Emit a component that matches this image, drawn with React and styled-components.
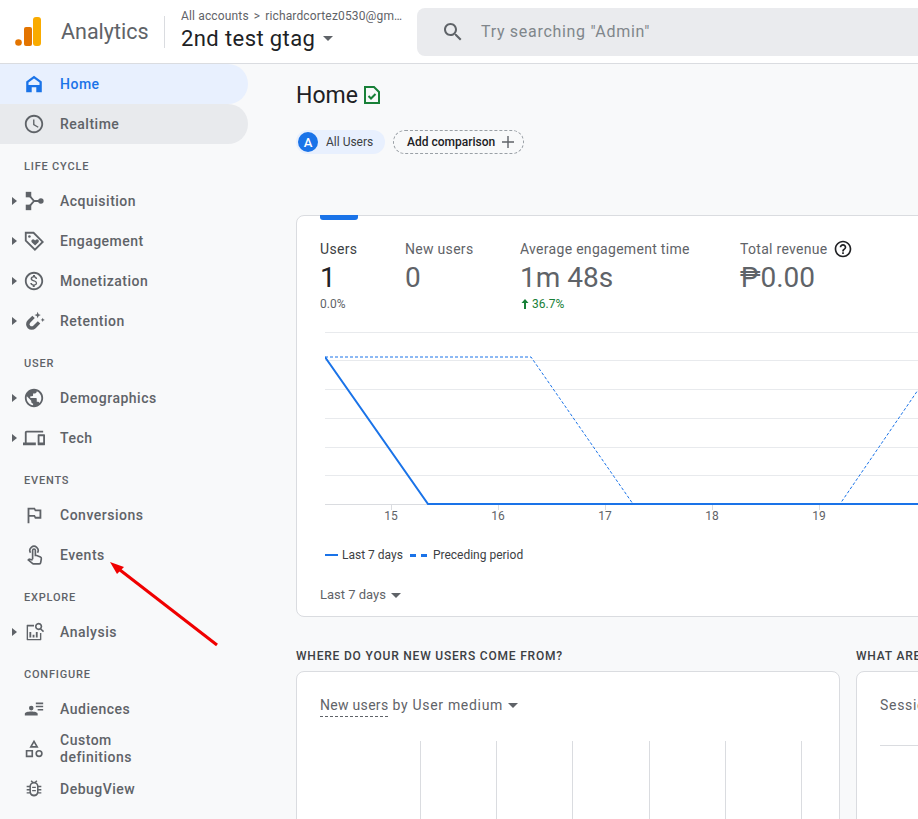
import React from 'react'
import styled, { createGlobalStyle } from 'styled-components'

const colors = {
  bg: '#f8f9fa',
  line: '#dadce0',
  grid: '#e8eaed',
  grey: '#5f6368',
  dark: '#202124',
  blue: '#1a73e8',
  paleBlue: '#e8f0fe',
  green: '#188038',
}

const GlobalStyle = createGlobalStyle`
  html, body {
    margin: 0;
    height: 100%;
    overflow: hidden;
    background: ${colors.bg};
    font-family: Roboto, "Liberation Sans", sans-serif;
  }
`

const Page = styled.div`
  position: relative;
  width: 918px;
  height: 819px;
  overflow: hidden;
  display: flex;
  flex-direction: column;
`

const Header = styled.header`
  height: 63px;
  flex: none;
  display: flex;
  align-items: center;
  background: #fff;
  border-bottom: 1px solid ${colors.line};
  white-space: nowrap;
`

const Logo = styled.svg`
  width: 32px;
  height: 32px;
  margin-left: 13px;
  flex: none;
`

const Product = styled.div`
  margin-left: 16px;
  width: 103px;
  flex: none;
  font-size: 21.5px;
  color: ${colors.grey};
`

const Account = styled.div`
  border-left: 1px solid ${colors.line};
  height: 32px;
  flex: none;
  margin-right: 13px;
`

const Picker = styled.div`
  width: 223px;
  flex: none;
  margin-left: 3px;
`

const Crumb = styled.div`
  font-size: 12px;
  line-height: 16px;
  letter-spacing: 0.15px;
  color: ${colors.grey};
  margin-top: -3px;
`

const CrumbSep = styled.span`
  margin: 0 5px;
`

const Property = styled.div`
  display: flex;
  align-items: center;
  font-size: 22px;
  line-height: 27px;
  letter-spacing: 0.4px;
  color: ${colors.dark};
  margin-top: 1px;
`

const Caret = styled.i`
  display: inline-block;
  width: 0;
  height: 0;
  border-left: 5px solid transparent;
  border-right: 5px solid transparent;
  border-top: 5px solid ${colors.grey};
  margin-left: ${p => p.$gap || 8}px;
`

const SearchBox = styled.div`
  width: 560px;
  height: 48px;
  flex: none;
  margin-left: 13px;
  padding-left: 24px;
  box-sizing: border-box;
  display: flex;
  align-items: center;
  gap: 16px;
  background: #eaebee;
  border-radius: 8px;
  font-size: 16px;
  letter-spacing: 0.7px;
  color: #80868b;
`

const SearchIcon = styled.svg`
  width: 24px;
  height: 24px;
  flex: none;
  fill: ${colors.grey};
`

const Body = styled.div`
  flex: 1;
  display: flex;
  min-height: 0;
`

const Sidebar = styled.nav`
  width: 248px;
  flex: none;
`

const SectionLabel = styled.div`
  height: 37px;
  padding: 16px 0 0 24px;
  box-sizing: border-box;
  font-size: 11px;
  line-height: 14px;
  font-weight: 500;
  letter-spacing: 0.8px;
  color: ${colors.grey};
`

const Row = styled.div`
  height: 40px;
  display: flex;
  align-items: center;
  padding-left: 12px;
  border-radius: ${p => (p.$active || p.$hover ? '0 20px 20px 0' : '0')};
  background: ${p => (p.$active ? colors.paleBlue : p.$hover ? '#e8eaed' : 'transparent')};
  color: ${p => (p.$active ? colors.blue : colors.grey)};
`

const Expander = styled.span`
  width: 10px;
  flex: none;
  display: flex;
  align-items: center;
`

const ExpanderMark = styled.i`
  width: 0;
  height: 0;
  border-top: 4px solid transparent;
  border-bottom: 4px solid transparent;
  border-left: 5px solid ${colors.grey};
`

const RowIcon = styled.svg`
  width: 22px;
  height: 22px;
  margin: 0 1px;
  flex: none;
  fill: currentColor;
`

const RowLabel = styled.span`
  margin-left: 14px;
  font-size: 14px;
  line-height: 17px;
  font-weight: 500;
  letter-spacing: 0.5px;
`

const Main = styled.main`
  flex: 1;
  min-width: 0;
  padding-left: 48px;
`

const TitleRow = styled.div`
  height: 32px;
  margin-top: 15px;
  display: flex;
  align-items: center;
  gap: 6px;
  font-size: 23px;
  color: ${colors.dark};
`

const TitleIcon = styled.svg`
  width: 20px;
  height: 20px;
  fill: none;
  stroke: ${colors.green};
  stroke-width: 2;
  margin-left: -2px;
`

const PillRow = styled.div`
  display: flex;
  align-items: center;
  gap: 8px;
  margin-top: 19px;
`

const SegmentPill = styled.div`
  height: 24px;
  width: 89px;
  box-sizing: border-box;
  display: flex;
  align-items: center;
  gap: 8px;
  padding-left: 2px;
  border-radius: 12px;
  background: ${colors.paleBlue};
  font-size: 12px;
  color: #3c4043;
`

const Badge = styled.span`
  width: 20px;
  height: 20px;
  border-radius: 50%;
  background: ${colors.blue};
  color: #fff;
  font-size: 13px;
  font-weight: 500;
  display: flex;
  align-items: center;
  justify-content: center;
`

const ComparePill = styled.div`
  height: 24px;
  width: 131px;
  box-sizing: border-box;
  display: flex;
  align-items: center;
  gap: 6px;
  padding-left: 13px;
  border: 1px dashed #9aa0a6;
  border-radius: 12px;
  font-size: 12px;
  font-weight: 500;
  color: ${colors.dark};
`

const Card = styled.section`
  position: relative;
  box-sizing: border-box;
  width: ${p => p.$width}px;
  height: ${p => p.$height}px;
  flex: none;
  background: #fff;
  border: 1px solid ${colors.line};
  border-radius: 8px;
  padding-left: 23px;
`

const OverviewCard = styled(Card)`
  margin-top: 61px;
`

const ActiveTab = styled.div`
  position: absolute;
  left: 23px;
  top: -1px;
  width: 38px;
  height: 5px;
  background: ${colors.blue};
  border-radius: 0 0 3px 3px;
`

const Metrics = styled.div`
  display: grid;
  grid-template-columns: 85px 115px 220px auto;
  justify-content: start;
  padding-top: 24px;
  height: 91px;
`

const MetricName = styled.div`
  font-size: 14px;
  line-height: 18px;
  letter-spacing: 0.3px;
  color: ${p => (p.$on ? '#3c4043' : colors.grey)};
  display: flex;
  align-items: center;
  gap: 5px;
`

const HelpIcon = styled.svg`
  width: 20px;
  height: 20px;
  margin: -1px 0;
  fill: ${colors.dark};
`

const MetricValue = styled.div`
  font-size: 28px;
  line-height: 36px;
  margin-top: 2px;
  color: ${p => (p.$on ? colors.dark : colors.grey)};
`

const MetricDelta = styled.div`
  font-size: 12px;
  line-height: 14px;
  margin-top: 1px;
  color: ${p => (p.$up ? colors.green : colors.grey)};
  display: flex;
  align-items: center;
  gap: 2px;
`

const Chart = styled.svg`
  display: block;
  width: 593px;
  height: 195px;
  margin-left: 5px;
  margin-top: 1px;
`

const AxisText = styled.text`
  font-size: 12px;
  fill: ${colors.grey};
  text-anchor: middle;
`

const Legend = styled.div`
  display: flex;
  align-items: center;
  height: 16px;
  margin: 20px 0 0 5px;
  font-size: 12px;
  color: #3c4043;
`

const SolidKey = styled.span`
  width: 13px;
  height: 2px;
  background: ${colors.blue};
  margin-right: 4px;
`

const DashedKey = styled.span`
  width: 17px;
  height: 0;
  border-top: 3px dashed ${colors.blue};
  margin: 0 6px 0 7px;
`

const RangeSelect = styled.div`
  display: flex;
  align-items: center;
  margin-top: 24px;
  font-size: 13px;
  line-height: 16px;
  color: ${colors.grey};
`

const QuestionRow = styled.div`
  display: flex;
  gap: 16px;
  margin-top: 32px;
`

const Question = styled.h2`
  width: 544px;
  flex: none;
  margin: 0;
  font-size: 12px;
  line-height: 14px;
  font-weight: 500;
  letter-spacing: 0.8px;
  color: #3c4043;
  white-space: nowrap;
`

const CardRow = styled.div`
  display: flex;
  gap: 16px;
  margin-top: 8px;
`

const CardTitle = styled.div`
  display: flex;
  align-items: center;
  padding-top: 24px;
  font-size: 14px;
  line-height: 18px;
  letter-spacing: 0.7px;
  color: ${colors.grey};
`

const Dotted = styled.span`
  border-bottom: 1px dashed ${colors.grey};
  padding-bottom: 2px;
  margin: 0 4px -3px 0;
  letter-spacing: 0.3px;
`

const Bars = styled.div`
  display: flex;
  margin: 27px 0 0 100px;
`

const BarLine = styled.div`
  width: 76.2px;
  height: 100px;
  flex: none;
  border-left: 1px solid ${colors.line};
  box-sizing: border-box;
`

const Rule = styled.div`
  height: 1px;
  background: ${colors.line};
  margin-top: 31px;
`

const Arrow = styled.svg`
  position: absolute;
  left: 100px;
  top: 555px;
  width: 125px;
  height: 100px;
`

const line = { fill: 'none', stroke: 'currentColor', strokeWidth: 2 }

const icons = {
  home: <path fillRule="evenodd" d="M12 3 3.500 9.400V21h17V9.400L12 3zm0 2.900-6 4.500V13h12v-2.600l-6-4.500zM9.500 15.500V21h5v-5.500h-5z" />,
  clock: <path d="M11.990 2C6.470 2 2 6.480 2 12s4.470 10 9.990 10C17.520 22 22 17.520 22 12S17.520 2 11.990 2zM12 20c-4.420 0-8-3.580-8-8s3.580-8 8-8 8 3.580 8 8-3.580 8-8 8zm.5-13H11v6l5.250 3.150.750-1.230-4.500-2.670z" />,
  acquisition: (
    <>
      <rect x="3" y="2" width="6" height="6" />
      <rect x="3" y="16" width="6" height="6" />
      <circle cx="19.500" cy="12" r="3" />
      <path {...line} d="M6 5l6 7-6 7M12 12h6" />
    </>
  ),
  tag: (
    <>
      <path {...line} d="M3 3h8.500l10 10-8.500 8.500-10-10V3z" />
      <circle cx="7" cy="7" r="1.400" />
      <path d="m13.200 17-3.700-3.700a2 2 0 0 1 2.800-2.800l.9.900.9-.9a2 2 0 0 1 2.800 2.800L13.200 17z" />
    </>
  ),
  money: <path d="M12 2C6.480 2 2 6.480 2 12s4.480 10 10 10 10-4.480 10-10S17.520 2 12 2zm0 18c-4.410 0-8-3.590-8-8s3.590-8 8-8 8 3.590 8 8-3.590 8-8 8zm.3-8.900c-1.800-.5-2.300-.9-2.300-1.600 0-.8.700-1.300 1.900-1.300 1.300 0 1.800.6 1.800 1.500h1.700c-.1-1.300-.8-2.400-2.300-2.800V5.500h-2.200v1.400c-1.500.3-2.600 1.300-2.600 2.700 0 1.700 1.400 2.500 3.400 3 1.900.5 2.200 1.100 2.200 1.800 0 .5-.4 1.300-2 1.300-1.500 0-2.100-.7-2.200-1.500H7.900c.1 1.600 1.300 2.500 2.700 2.800v1.500h2.200V17c1.400-.3 2.600-1.100 2.600-2.600 0-2.100-1.800-2.800-3.100-3.300z" />,
  magnet: (
    <>
      <path fill="none" stroke="currentColor" strokeWidth="3.800" d="M11.500 7.500 6.500 12.500a4.200 4.200 0 0 0 6 6l5-5" />
      <path d="m16 2 1 2.500 2.500 1-2.500 1-1 2.500-1-2.500-2.500-1 2.500-1L16 2zm5.500 6.500.7 1.600 1.600.7-1.600.7-.7 1.600-.7-1.600-1.600-.7 1.600-.7.7-1.600z" />
    </>
  ),
  globe: <path d="M12 2C6.480 2 2 6.480 2 12s4.480 10 10 10 10-4.480 10-10S17.520 2 12 2zm-1 17.930c-3.950-.49-7-3.850-7-7.930 0-.62.08-1.210.21-1.790L9 15v1c0 1.100.9 2 2 2v1.930zm6.900-2.540c-.26-.81-1-1.390-1.900-1.390h-1v-3c0-.55-.45-1-1-1H8v-2h2c.55 0 1-.45 1-1V7h2c1.100 0 2-.9 2-2v-.41c2.930 1.190 5 4.060 5 7.410 0 2.080-.8 3.970-2.100 5.390z" />,
  devices: <path d="M4 6h18V4H4c-1.100 0-2 .9-2 2v11H0v3h14v-3H4V6zm19 2h-6c-.55 0-1 .45-1 1v10c0 .55.45 1 1 1h6c.55 0 1-.45 1-1V9c0-.55-.45-1-1-1zm-1 9h-4v-7h4v7z" />,
  flag: <path d="m14 6-1-2H5v17h2v-7h5l1 2h7V6h-6zm4 8h-4l-1-2H7V6h5l1 2h5v6z" />,
  touch: (
    <>
      <path {...line} strokeWidth="1.800" d="M8.200 9.500A4.500 4.500 0 1 1 15.800 9.500" />
      <path {...line} strokeWidth="1.800" d="M10.500 16.500V7a1.500 1.500 0 0 1 3 0v5.500h1.500l4 1.800c.7.300 1.100 1 1 1.800l-.7 4.200c-.1.800-.7 1.300-1.500 1.300h-6.500c-.4 0-.8-.2-1-.4L5.800 17.500l1-1 3.700 1" />
    </>
  ),
  analysis: <path d="M4.500 4H12v2H5.500v13.500h13V13H20v7.500c0 .3-.2.500-.5.500h-15a.5.5 0 0 1-.5-.5v-16c0-.3.2-.5.5-.5zM7 12h2v6H7v-6zm3.500 3h2v3h-2v-3zm3.500-3h2v6h-2v-6zM17 2a4 4 0 0 1 3.200 6.400L23 11l-1.200 1.200-2.800-2.700A4 4 0 1 1 17 2zm0 1.800a2.200 2.200 0 1 0 0 4.400 2.200 2.200 0 0 0 0-4.400z" />,
  audience: <path d="M9 8.500a2.500 2.500 0 1 1 0 5 2.500 2.500 0 0 1 0-5zM2 19v-1.700C2 15.500 5.500 14.700 9 14.700s7 .8 7 2.600V19H2zm12-14h8v1.700h-8V5zm0 3.500h8v1.700h-8V8.500zm2 3.500h6v1.700h-6V12z" />,
  shapes: <path d="m12 2 5 8.500H7L12 2zm0 3.400-1.900 3.300h3.800L12 5.400zM3 13h8v8H3v-8zm1.800 1.800v4.400h4.400v-4.400H4.800zM17.500 13a4 4 0 1 1 0 8 4 4 0 0 1 0-8zm0 1.800a2.200 2.200 0 1 0 0 4.400 2.200 2.200 0 0 0 0-4.400z" />,
  bug: <path d="M9.500 2.500 11 4.200a5 5 0 0 1 2 0l1.500-1.700 1.200 1-1.300 1.500A5 5 0 0 1 17 8.500h3V10h-3v2h3v1.500h-3v2h3V17h-3.300a5 5 0 0 1-9.400 0H4v-1.500h3v-2H4V12h3v-2H4V8.500h3a5 5 0 0 1 2.600-3.500L8.300 3.500l1.200-1zM12 6a3.300 3.300 0 0 0-3.300 3.300v5.400a3.300 3.300 0 0 0 6.600 0V9.300A3.300 3.300 0 0 0 12 6zm-2 3.500h4V11h-4V9.500zm0 3.500h4v1.500h-4V13z" />,
}

const Icon = ({ name }) => (
  <RowIcon viewBox="0 0 24 24">{icons[name]}</RowIcon>
)

const NavRow = ({ icon, label, expand, active, hover }) => (
  <Row $active={active} $hover={hover}>
    <Expander>{expand && <ExpanderMark />}</Expander>
    <Icon name={icon} />
    <RowLabel>{label}</RowLabel>
  </Row>
)

const navGroups = [
  {
    title: 'LIFE CYCLE',
    rows: [
      { icon: 'acquisition', label: 'Acquisition', expand: true },
      { icon: 'tag', label: 'Engagement', expand: true },
      { icon: 'money', label: 'Monetization', expand: true },
      { icon: 'magnet', label: 'Retention', expand: true },
    ],
  },
  {
    title: 'USER',
    rows: [
      { icon: 'globe', label: 'Demographics', expand: true },
      { icon: 'devices', label: 'Tech', expand: true },
    ],
  },
  {
    title: 'EVENTS',
    rows: [
      { icon: 'flag', label: 'Conversions' },
      { icon: 'touch', label: 'Events' },
    ],
  },
  {
    title: 'EXPLORE',
    rows: [{ icon: 'analysis', label: 'Analysis', expand: true }],
  },
  {
    title: 'CONFIGURE',
    rows: [
      { icon: 'audience', label: 'Audiences' },
      { icon: 'shapes', label: <>Custom<br />definitions</> },
      { icon: 'bug', label: 'DebugView' },
    ],
  },
]

// chart coords: page x minus 325, page y minus 332
const gridYs = [0, 28, 57, 86, 115, 143]
const days = [
  { label: '15', x: 66 },
  { label: '16', x: 173 },
  { label: '17', x: 280 },
  { label: '18', x: 387 },
  { label: '19', x: 494 },
  { label: '20', x: 601 },
]

const UsersChart = () => (
  <Chart viewBox="0 0 593 195">
    {gridYs.map(y => (
      <line key={y} x1="0" x2="593" y1={y + 0.5} y2={y + 0.5} stroke={colors.grid} />
    ))}
    <line x1="0" x2="593" y1="172.500" y2="172.500" stroke={colors.line} />
    {days.map(d => (
      <g key={d.label}>
        <line x1={d.x + 0.5} x2={d.x + 0.5} y1="172" y2="178" stroke={colors.line} />
        <AxisText x={d.x} y="188">{d.label}</AxisText>
      </g>
    ))}
    <polyline
      points="0,25 206,25 308,172 515,172 593,58"
      fill="none"
      stroke={colors.blue}
      strokeWidth="1"
      strokeDasharray="3 2"
    />
    <polyline points="0,25 103,172 593,172" fill="none" stroke={colors.blue} strokeWidth="2" />
  </Chart>
)

export default function App() {
  return (
    <Page>
      <GlobalStyle />
      <Header>
        <Logo viewBox="0 0 32 32">
          <circle cx="5.500" cy="26.500" r="3.300" fill="#e37400" />
          <rect x="11" y="11" width="8" height="19" rx="2" fill="#e37400" />
          <rect x="20" y="1" width="8" height="29" rx="3" fill="#f9ab00" />
        </Logo>
        <Product>Analytics</Product>
        <Account />
        <Picker>
          <Crumb>All accounts<CrumbSep>&gt;</CrumbSep>richardcortez0530@gm…</Crumb>
          <Property>2nd test gtag<Caret /></Property>
        </Picker>
        <SearchBox>
          <SearchIcon viewBox="0 0 24 24">
            <path d="M15.500 14h-.79l-.28-.27C15.410 12.590 16 11.110 16 9.500 16 5.910 13.090 3 9.500 3S3 5.910 3 9.500 5.910 16 9.500 16c1.610 0 3.090-.59 4.230-1.570l.27.28v.79l5 4.990L20.490 19l-4.990-5zm-6 0C7.010 14 5 11.990 5 9.500S7.010 5 9.500 5 14 7.010 14 9.500 11.990 14 9.500 14z" />
          </SearchIcon>
          Try searching "Admin"
        </SearchBox>
      </Header>
      <Body>
        <Sidebar>
          <NavRow icon="home" label="Home" active />
          <NavRow icon="clock" label="Realtime" hover />
          {navGroups.map(group => (
            <div key={group.title}>
              <SectionLabel>{group.title}</SectionLabel>
              {group.rows.map(row => (
                <NavRow key={row.icon} {...row} />
              ))}
            </div>
          ))}
        </Sidebar>
        <Main>
          <TitleRow>
            Home
            <TitleIcon viewBox="0 0 20 20">
              <path d="M3 2h9l5 5v11H3V2z" />
              <path d="m6.500 11 2.500 2.500 4.500-4.500" />
            </TitleIcon>
          </TitleRow>
          <PillRow>
            <SegmentPill><Badge>A</Badge>All Users</SegmentPill>
            <ComparePill>
              Add comparison
              <svg width="14" height="14" viewBox="0 0 14 14" stroke={colors.grey} strokeWidth="1.400">
                <path d="M7 1v12M1 7h12" />
              </svg>
            </ComparePill>
          </PillRow>
          <OverviewCard $width={800} $height={402}>
            <ActiveTab />
            <Metrics>
              <div>
                <MetricName $on>Users</MetricName>
                <MetricValue $on>1</MetricValue>
                <MetricDelta>0.0%</MetricDelta>
              </div>
              <div>
                <MetricName>New users</MetricName>
                <MetricValue>0</MetricValue>
              </div>
              <div>
                <MetricName>Average engagement time</MetricName>
                <MetricValue>1m 48s</MetricValue>
                <MetricDelta $up>
                  <svg width="10" height="10" viewBox="0 0 10 10" fill={colors.green}>
                    <path d="M5 0 8.500 4H6v6H4V4H1.500L5 0z" />
                  </svg>
                  36.7%
                </MetricDelta>
              </div>
              <div>
                <MetricName>
                  Total revenue
                  <HelpIcon viewBox="0 0 24 24">
                    <path d="M11 18h2v-2h-2v2zm1-16C6.480 2 2 6.480 2 12s4.480 10 10 10 10-4.480 10-10S17.520 2 12 2zm0 18c-4.410 0-8-3.590-8-8s3.590-8 8-8 8 3.590 8 8-3.590 8-8 8zm0-14c-2.210 0-4 1.790-4 4h2c0-1.100.9-2 2-2s2 .9 2 2c0 2-3 1.750-3 5h2c0-2.250 3-2.500 3-5 0-2.210-1.790-4-4-4z" />
                  </HelpIcon>
                </MetricName>
                <MetricValue>₱0.00</MetricValue>
              </div>
            </Metrics>
            <UsersChart />
            <Legend>
              <SolidKey />Last 7 days<DashedKey />Preceding period
            </Legend>
            <RangeSelect>Last 7 days<Caret $gap={5} /></RangeSelect>
          </OverviewCard>
          <QuestionRow>
            <Question>WHERE DO YOUR NEW USERS COME FROM?</Question>
            <Question>WHAT ARE YOUR TOP CAMPAIGNS?</Question>
          </QuestionRow>
          <CardRow>
            <Card $width={544} $height={200}>
              <CardTitle>
                <Dotted>New users</Dotted> by User medium<Caret $gap={5} />
              </CardTitle>
              <Bars>
                {[0, 1, 2, 3, 4, 5].map(i => <BarLine key={i} />)}
              </Bars>
            </Card>
            <Card $width={300} $height={200}>
              <CardTitle>Sessions by Session medium</CardTitle>
              <Rule />
            </Card>
          </CardRow>
        </Main>
      </Body>
      <Arrow viewBox="0 0 125 100">
        <line x1="117" y1="90" x2="20" y2="15" stroke="#f00000" strokeWidth="3" />
        <polygon points="10,7 24,12 17,19" fill="#f00000" />
      </Arrow>
    </Page>
  )
}
